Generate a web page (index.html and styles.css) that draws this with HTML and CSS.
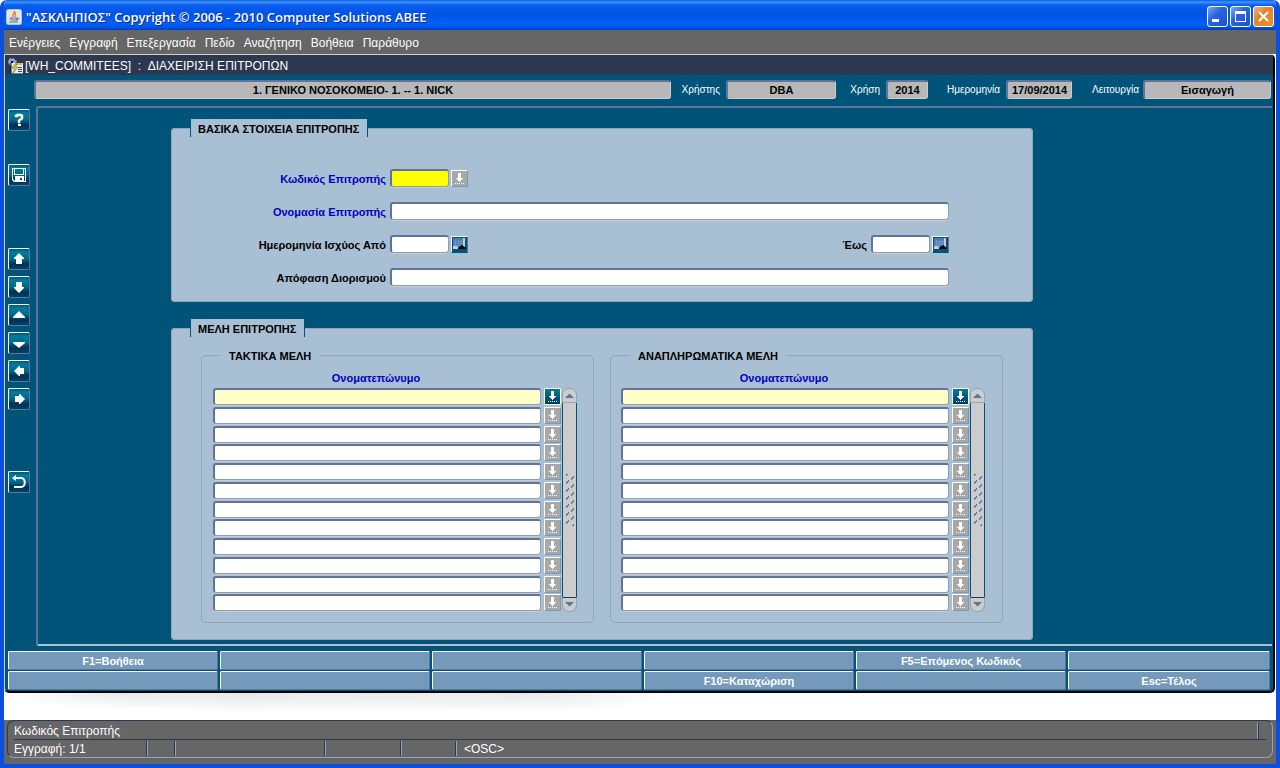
FILE: index.html
```html
<!DOCTYPE html>
<html lang="el">
<head>
    <meta charset="UTF-8">
    <title>"ΑΣΚΛΗΠΙΟΣ" Copyright © 2006 - 2010 Computer Solutions ΑΒΕΕ</title>
    <link rel="stylesheet" href="styles.css">
</head>
<body>
    <!-- shared icons -->
    <svg class="sprite" aria-hidden="true">
        <symbol id="i-list" viewBox="0 0 15 15">
            <path d="M6 2h3v5h2v1h-1v1H9v1H8v1H7v-1H6V9H5V8H4V7h2z" fill="#fff"/>
            <path d="M3 12.500h10" stroke="#fff" stroke-dasharray="1 1"/>
        </symbol>
        <symbol id="i-calendar" viewBox="0 0 15 15">
            <path d="M1 1h11v10H1z" fill="#4a7ab5"/>
            <path d="M2 4h9v1H2zM2 6h9v1H2zM2 8h6v1H2zM3 3h1v6H3zM6 3h1v6H6zM9 3h1v6H9z" fill="#6c94c8"/>
            <path d="M11 1h2v11H6v-1h5zM1 9h4l2 3H1z" fill="#ccc"/>
            <path d="M6 12v-1l4-3 4 3v1z" fill="#000"/>
        </symbol>
    </svg>

    <div class="window">
        <header class="titlebar">
            <svg class="app-icon" viewBox="0 0 16 16" aria-hidden="true">
                <rect x=".5" y=".5" width="15" height="15" rx="2" fill="#e4e4e4" stroke="#b8c4d8"/>
                <path d="M8 2c2 2-3 3-1 6M10 3c-3 2 1 3-1 5" fill="none" stroke="#e8862c" stroke-width="1.500"/>
                <path d="M4 9h7v2H5zM11 9c3 0 2 2-1 2M3 13h9" fill="none" stroke="#54739b"/>
            </svg>
            <h1>"ΑΣΚΛΗΠΙΟΣ" Copyright © 2006 - 2010 Computer Solutions ΑΒΕΕ</h1>
            <button class="win-btn" aria-label="Ελαχιστοποίηση"><svg viewBox="0 0 17 17"><path d="M3 11h7v3H3z" fill="#fff"/></svg></button>
            <button class="win-btn" aria-label="Μεγιστοποίηση"><svg viewBox="0 0 17 17"><path d="M3 3h11v11H3zM4 6v7h9V6z" fill="#fff" fill-rule="evenodd"/></svg></button>
            <button class="win-btn close" aria-label="Κλείσιμο"><svg viewBox="0 0 17 17"><path d="M4 4l9 9M13 4l-9 9" stroke="#fff" stroke-width="2"/></svg></button>
        </header>

        <nav class="menu">
            <button>Ενέργειες</button>
            <button>Εγγραφή</button>
            <button>Επεξεργασία</button>
            <button>Πεδίο</button>
            <button>Αναζήτηση</button>
            <button>Βοήθεια</button>
            <button>Παράθυρο</button>
        </nav>

        <div class="desktop">
            <main class="form-window">
                <div class="form-title">
                    <svg viewBox="0 0 16 16" aria-hidden="true">
                        <path d="M2 1l2-1 1 1 2-1 1 2 2 1-1 2-2 2-3 1-2-2-1-2z" fill="#8fa6d8"/>
                        <path d="M4 3h2v2H4z" fill="#111"/>
                        <path d="M4 5h12v11H4z" fill="#e8ecf8"/>
                        <path d="M4 5v11h12" fill="none" stroke="#111"/>
                        <path d="M8 5h7v2H8z" fill="#f4b13c"/>
                        <path d="M11 9.500h4M11 11.500h4M11 13.500h4" stroke="#2b4aa8"/>
                        <path d="M8 6l-3 4h3l-2 5 5-6H8l2-3z" fill="#ffe600" stroke="#444" stroke-width=".5"/>
                    </svg>
                    <h2>[WH_COMMITEES]  :  ΔΙΑΧΕΙΡΙΣΗ ΕΠΙΤΡΟΠΩΝ</h2>
                </div>

                <div class="context">
                    <input class="ctx-org" aria-label="Οργανισμός" readonly value="1. ΓΕΝΙΚΟ ΝΟΣΟΚΟΜΕΙΟ- 1. -- 1. NICK">
                    <label for="user">Χρήστης</label>
                    <input class="ctx-user" id="user" readonly value="DBA">
                    <label for="year">Χρήση</label>
                    <input class="ctx-year" id="year" readonly value="2014">
                    <label for="date">Ημερομηνία</label>
                    <input class="ctx-date" id="date" readonly value="17/09/2014">
                    <label for="mode">Λειτουργία</label>
                    <input class="ctx-mode" id="mode" readonly value="Εισαγωγή">
                </div>

                <div class="work">
                    <div class="toolbar">
                        <button aria-label="Βοήθεια"><svg viewBox="0 0 20 20"><path d="M6 7V5l2-1h4l2 1v4l-3 2v2H9v-3l3-2V6L9 6v1z" fill="#fff" stroke="#fff" stroke-width=".5"/><path d="M9 14h3v2H9z" fill="#fff"/></svg></button>
                        <button class="save" aria-label="Αποθήκευση"><svg viewBox="0 0 20 20"><path d="M3 3h14v14H5l-2-2zM4 4v10l2 2v-5h9v5h1V4h-1v6H5V4zM6 4v5h8V4z" fill="#fff" fill-rule="evenodd"/><path d="M7 13h6v3H7z" fill="#fff"/><path d="M11 13h2v2h-2z" fill="#00476b"/></svg></button>
                        <button class="nav-first" aria-label="Προηγούμενο μπλοκ"><svg viewBox="0 0 20 20"><path d="M10 4l5 5v1h-2v5H7v-5H5V9z" fill="#fff"/></svg></button>
                        <button aria-label="Επόμενο μπλοκ"><svg viewBox="0 0 20 20"><path d="M10 16l5-5v-1h-2V5H7v5H5v1z" fill="#fff"/></svg></button>
                        <button aria-label="Προηγούμενη εγγραφή"><svg viewBox="0 0 20 20"><path d="M10 6l6 6v1H4v-1z" fill="#fff"/></svg></button>
                        <button aria-label="Επόμενη εγγραφή"><svg viewBox="0 0 20 20"><path d="M10 15l6-5V9H4v1z" fill="#fff"/></svg></button>
                        <button aria-label="Προηγούμενο πεδίο"><svg viewBox="0 0 20 20"><path d="M5 10l5-5h1v2h4v6h-4v2h-1z" fill="#fff"/></svg></button>
                        <button aria-label="Επόμενο πεδίο"><svg viewBox="0 0 20 20"><path d="M16 10l-5-5h-1v2H6v6h4v2h1z" fill="#fff"/></svg></button>
                        <button class="back" aria-label="Επιστροφή"><svg viewBox="0 0 20 20"><path d="M5 6h7c5 0 5 9 0 9H5" fill="none" stroke="#fff" stroke-width="2"/><path d="M3 6l4-3v6z" fill="#fff"/></svg></button>
                    </div>

                    <div class="canvas">
                        <fieldset class="panel basics">
                            <legend>ΒΑΣΙΚΑ ΣΤΟΙΧΕΙΑ ΕΠΙΤΡΟΠΗΣ</legend>
                            <div class="row">
                                <label class="key" for="code">Κωδικός Επιτροπής</label>
                                <input class="short active" id="code">
                                <button class="lov" aria-label="Λίστα επιτροπών"><svg><use href="#i-list"/></svg></button>
                            </div>
                            <div class="row">
                                <label class="key" for="name">Ονομασία Επιτροπής</label>
                                <input class="long" id="name">
                            </div>
                            <div class="row">
                                <label for="from">Ημερομηνία Ισχύος Από</label>
                                <input class="short" id="from">
                                <button class="lov cal" aria-label="Ημερολόγιο από"><svg><use href="#i-calendar"/></svg></button>
                                <label class="to" for="to">Έως</label>
                                <input class="short" id="to">
                                <button class="lov cal" aria-label="Ημερολόγιο έως"><svg><use href="#i-calendar"/></svg></button>
                            </div>
                            <div class="row">
                                <label for="decision">Απόφαση Διορισμού</label>
                                <input class="long" id="decision">
                            </div>
                        </fieldset>

                        <fieldset class="panel">
                            <legend>ΜΕΛΗ ΕΠΙΤΡΟΠΗΣ</legend>
                            <div class="members">
                                <fieldset class="group">
                                    <legend>ΤΑΚΤΙΚΑ ΜΕΛΗ</legend>
                                    <div class="col-title">Ονοματεπώνυμο</div>
                                    <div class="list">
                                        <div class="rows"></div>
                                        <div class="scroll">
                                            <button aria-label="Πάνω"><svg viewBox="0 0 9 5"><path d="M0 5l4-4h1l4 4z"/></svg></button>
                                            <div class="thumb"></div>
                                            <button aria-label="Κάτω"><svg viewBox="0 0 9 5"><path d="M0 0l4 4h1l4-4z"/></svg></button>
                                        </div>
                                    </div>
                                </fieldset>
                                <fieldset class="group">
                                    <legend>ΑΝΑΠΛΗΡΩΜΑΤΙΚΑ ΜΕΛΗ</legend>
                                    <div class="col-title">Ονοματεπώνυμο</div>
                                    <div class="list">
                                        <div class="rows"></div>
                                        <div class="scroll">
                                            <button aria-label="Πάνω"><svg viewBox="0 0 9 5"><path d="M0 5l4-4h1l4 4z"/></svg></button>
                                            <div class="thumb"></div>
                                            <button aria-label="Κάτω"><svg viewBox="0 0 9 5"><path d="M0 0l4 4h1l4-4z"/></svg></button>
                                        </div>
                                    </div>
                                </fieldset>
                            </div>
                        </fieldset>
                    </div>
                </div>

                <div class="fkeys">
                    <button>F1=Βοήθεια</button>
                    <button></button>
                    <button></button>
                    <button></button>
                    <button>F5=Επόμενος Κωδικός</button>
                    <button></button>
                    <button></button>
                    <button></button>
                    <button></button>
                    <button>F10=Καταχώριση</button>
                    <button></button>
                    <button>Esc=Τέλος</button>
                </div>
            </main>
            <div class="backdrop"></div>
        </div>

        <footer class="status">
            <div class="status-box">
                <div class="hint">Κωδικός Επιτροπής</div>
                <div class="cells">
                    <span class="record">Εγγραφή: 1/1</span>
                    <span class="c1"></span>
                    <span class="c2"></span>
                    <span class="c3"></span>
                    <span class="c4"></span>
                    <span class="osc">&lt;OSC&gt;</span>
                </div>
            </div>
        </footer>
    </div>

    <script>
        // 12 name fields with a list button in each block
        document.querySelectorAll('.rows').forEach(function(rows) {
            for (let i = 1; i <= 12; i++) {
                rows.innerHTML += `
                    <div class="member">
                        <input aria-label="Ονοματεπώνυμο ${i}">
                        <button class="lov" aria-label="Λίστα μελών ${i}"><svg><use href="#i-list"/></svg></button>
                    </div>
                `;
            }
        });
    </script>
</body>
</html>
```
FILE: styles.css
```css
* { box-sizing: border-box; }
body { margin: 0; font-family: "Liberation Sans", Arial, sans-serif; font-size: 11px; background: #fff; }
button, input { font: inherit; margin: 0; padding: 0; }
button { cursor: pointer; }
svg { display: block; }
.sprite { display: none; }
h1, h2 { margin: 0; }

.window { display: flex; flex-direction: column; min-height: 100vh; border: 4px solid #0a4fe0; border-top: 0; border-radius: 7px 7px 0 0; background: #fff; overflow: hidden; }

/* title bar */
.titlebar { display: flex; align-items: center; gap: 2px; height: 30px; margin: 0 -4px; padding: 3px 6px 0; background: linear-gradient(#0a5be0 0, #3d95ff 2px, #0a5df0 5px, #0054e3 14px, #0061fa 24px, #0050dc 28px, #003cc0 30px); }
.titlebar h1 { flex: 1; margin-left: 2px; font-family: "Open Sans", "Noto Sans", sans-serif; font-size: 13px; font-weight: 600; color: #fff; text-shadow: 1px 1px 0 #0a2a80; }
.app-icon { width: 16px; height: 16px; }
.win-btn { width: 21px; height: 21px; padding: 1px; border: 1px solid #fff; border-radius: 3px; background: linear-gradient(135deg, #7fa8f5, #2a66e0 40%, #1c50d0); }
.win-btn.close { background: linear-gradient(135deg, #eeb08a, #e4842c 40%, #e8902c); }
.win-btn svg { width: 17px; height: 17px; }

.menu { display: flex; gap: 9px; height: 24px; padding: 2px 5px 0; background: #666; }
.menu button { border: 0; background: none; color: #fff; font-size: 12px; }

.desktop { flex: 1; background: #fff; }
.form-window { margin-right: 1px; border: 1px solid #d4d0c8; border-right: 2px solid #000; border-bottom: 2px solid #000; border-radius: 0 5px 5px 5px; background: #005479; }
.form-title { display: flex; align-items: center; gap: 2px; height: 20px; padding: 1px 0 0 2px; background: #2b384f; color: #fff; }
.form-title svg { width: 16px; height: 16px; }
.form-title h2 { font-size: 12px; font-weight: normal; white-space: pre; }

/* organisation / user / date line */
.context { display: flex; align-items: center; height: 31px; padding: 0 2px 2px 29px; color: #fff; font-size: 10px; }
.context input { height: 19px; border: 2px solid #60749a; border-right: 1px solid #ccc; border-bottom: 1px solid #ccc; border-radius: 3px; background: #b8b8b8; color: #000; font-size: 11px; font-weight: bold; text-align: center; }
.context label { text-align: right; padding-right: 6px; }
.ctx-org { flex: 1; min-width: 0; }
.ctx-user { width: 110px; }
.ctx-year { width: 42px; }
.ctx-date { width: 66px; }
.ctx-mode { width: 128px; }
.context label[for="user"] { width: 55px; }
.context label[for="year"] { width: 50px; }
.context label[for="date"] { width: 78px; }
.context label[for="mode"] { width: 71px; padding-right: 4px; }

.work { display: flex; }
.toolbar { display: flex; flex-direction: column; gap: 6px; width: 31px; padding: 3px 0 0 3px; }
.toolbar button { width: 22px; height: 22px; border: 1px solid #fff; border-right-color: #60749a; border-bottom-color: #60749a; border-radius: 2px; background: linear-gradient(#00567a, #007c9c 15%, #00688c 50%, #002f56 75%, #00456a); }
.toolbar svg { width: 20px; height: 20px; }
.toolbar .save { margin-top: 27px; }
.toolbar .nav-first { margin-top: 56px; }
.toolbar .back { margin-top: 55px; }

.canvas { flex: 1; margin-right: 1px; padding: 11px 133px 4px; border: 2px solid #60749a; border-right: 0; border-bottom-color: #b4bccb; border-radius: 3px 0 0 3px; }

/* form panels */
.panel { max-width: 862px; min-width: 0; margin: 0 0 17px; padding: 0; border: 1px solid #93a4bb; border-radius: 4px; background: #a9bfd3; font-weight: bold; }
.panel:last-child { margin-bottom: 0; }
.panel > legend { height: 18px; margin-left: 18px; padding: 1px 8px 0 7px; line-height: 18px; border: 1px solid #005479; border-width: 0 1px; background: #a9bfd3; }
.basics { padding: 32px 0 15px; }
.row { display: flex; align-items: center; height: 18px; margin-bottom: 15px; }
.row:last-child { margin-bottom: 0; }
.row label { width: 215px; padding: 1px 1px 0 0; text-align: right; }
.row .to { width: 400px; }
.key, .col-title { color: #0000bf; }
.row input, .member input { height: 18px; border: 1px solid #8d9db8; border-top: 2px solid #60749a; border-left: 2px solid #60749a; border-radius: 3px; background: #fff; box-shadow: 0 1px 0 #ccc; }
.row input { margin-left: 3px; }
.row .short { width: 59px; }
.row .long { width: 559px; }
.row .active { background: #ff0; }
.lov { width: 17px; height: 17px; border: 1px solid #fff; border-right-color: #7599ba; border-bottom-color: #7599ba; border-radius: 1px; background: #a8a8a8; }
.lov svg { width: 15px; height: 15px; }
.row .lov { margin-left: 2px; }
.row .cal { border-right-color: #60749a; border-bottom-color: #005479; background: #005479; }

/* member lists */
.members { display: grid; grid-template-columns: 1fr 1fr; gap: 16px; padding: 11px 29px 16px; }
.group { min-width: 0; margin: 0; padding: 9px 16px 9px 11px; border: 1px solid #93a4bb; border-radius: 5px; }
.group + .group { padding: 9px 17px 9px 10px; }
.group legend { height: 15px; margin-left: 7px; padding: 1px 9px 0; line-height: 15px; }
.group + .group legend { margin-left: 8px; }
.col-title { height: 16px; padding-right: 38px; line-height: 13px; text-align: center; }
.list { display: flex; }
.rows { flex: 1; display: grid; grid-template-rows: repeat(12, 1fr); height: 225px; }
.member { display: flex; gap: 3px; }
.member input { flex: 1; min-width: 0; height: 17px; }
.member:first-child input { background: #ffffc8; }
.member:first-child .lov { border-color: #ffffc8; background: linear-gradient(#007c9c, #003a62); }
.scroll { display: flex; flex-direction: column; width: 15px; height: 224px; margin-left: 1px; }
.scroll button { height: 15px; padding: 0 2px; border: 1px solid #93a4bb; background: #ccc; }
.scroll button:first-child { border-radius: 7px 7px 0 0; }
.scroll button:last-child { border-radius: 0 0 7px 7px; border-top-color: #2b384f; }
.scroll svg { width: 9px; height: 5px; fill: #60749a; }
.thumb { flex: 1; display: flex; align-items: center; justify-content: center; border: 1px solid #005479; border-width: 0 1px; background: #ccc; }
/* grip: short diagonal ticks in two columns */
.thumb::before { content: ""; width: 8px; height: 52px; background: linear-gradient(135deg, transparent 45%, #60749a 45% 60%, transparent 60%) 0 4px / 3px 8px repeat-y, linear-gradient(135deg, transparent 45%, #60749a 45% 60%, transparent 60%) 5px 0 / 3px 8px repeat-y; }

.fkeys { display: grid; grid-template-columns: repeat(5, 105fr) 101fr; gap: 1px 2px; padding: 5px 3px 1px; }
.fkeys button { height: 19px; border: 1px solid #fff; border-right-color: #60749a; border-bottom-color: #60749a; border-radius: 2px; background: #7599ba; color: #fff; font-weight: bold; }

.backdrop { height: 27px; background: radial-gradient(ellipse 120px 16px at 120px 0, #e8e8e8, transparent), radial-gradient(ellipse 150px 20px at 240px 0, #e6e6e6, transparent), radial-gradient(ellipse 160px 20px at 390px 0, #eaeaea, transparent), radial-gradient(ellipse 150px 20px at 520px 0, #e8e8e8, transparent); }

/* status bar */
.status { padding: 0 3px 6px; background: #666; color: #fff; font-size: 12px; }
.status-box { padding: 1px 6px 0; border: 1px solid #93a4bb; border-top-color: #2b384f; border-left-color: #2b384f; border-radius: 7px; }
.hint { height: 18px; line-height: 18px; border-bottom: 1px solid #2b384f; background: linear-gradient(#2b384f, #2b384f) calc(100% - 7px) 0 / 1px 17px no-repeat, linear-gradient(#93a4bb, #93a4bb) calc(100% - 8px) 0 / 1px 17px no-repeat; }
.cells { display: flex; height: 17px; padding-top: 1px; line-height: 16px; }
.cells span { height: 15px; border-right: 1px solid #93a4bb; box-shadow: inset -1px 0 0 #2b384f; }
.cells .record { width: 134px; }
.cells .c1 { width: 28px; }
.cells .c2 { width: 150px; }
.cells .c3 { width: 76px; }
.cells .c4 { width: 55px; }
.cells .osc { padding-left: 7px; border: 0; box-shadow: none; }
```
